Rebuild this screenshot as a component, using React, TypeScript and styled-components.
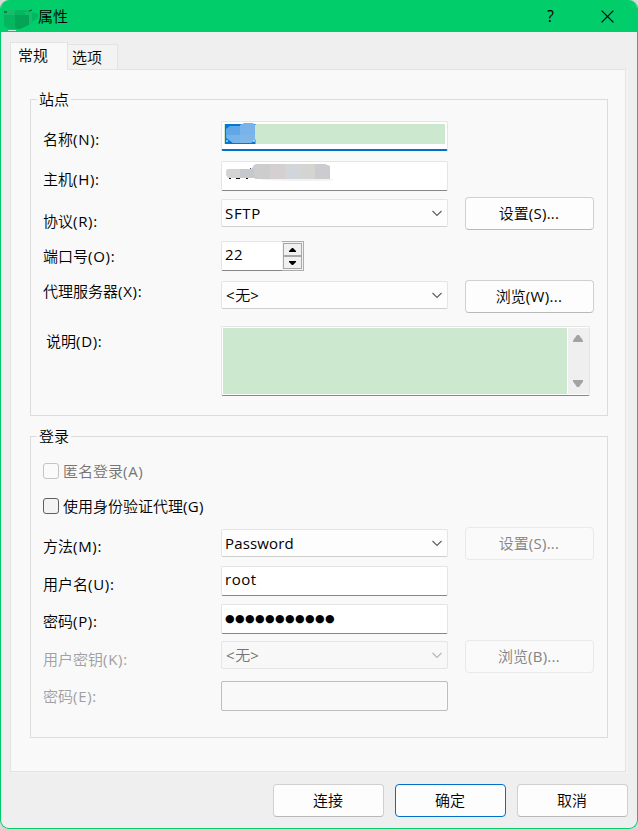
import React from "react";
import styled, { createGlobalStyle, css } from "styled-components";

const GlobalStyle = createGlobalStyle`
  * { box-sizing: border-box; }
  body { margin: 0; background: #d9d9d9; }
  body, button, input, textarea {
    font: 350 15px/20px "Open Sans", "Noto Sans CJK SC", sans-serif;
    color: #000;
  }
`;

const Window = styled.div`
  width: 638px;
  height: 829px;
  display: flex;
  flex-direction: column;
  border: 1px solid #02cd6b;
  border-top: 0;
  border-radius: 9px;
  overflow: hidden;
  background: #efefef;
`;

const TitleBar = styled.header`
  height: 32px;
  flex: none;
  display: flex;
  align-items: center;
  padding-right: 1px;
  background: #02cd6b;
`;

const TitleMosaic = styled.svg`
  flex: none;
  width: 37px;
  height: 32px;
`;

const Title = styled.h1`
  flex: 1;
  margin: 0;
  font-size: 15px;
  font-weight: 350;
`;

const TitleButton = styled.button`
  width: 57px;
  height: 32px;
  padding: 0;
  border: 0;
  background: none;
  display: flex;
  align-items: center;
  justify-content: center;
  font-size: 16px;
  font-weight: 400;
`;

const TabList = styled.div`
  height: 38px;
  flex: none;
  display: flex;
  align-items: flex-end;
  padding-left: 9px;
  position: relative;
  z-index: 1;
`;

const Tab = styled.button<{ $active?: boolean }>`
  border: 1px solid #e3e3e3;
  ${(p) =>
    p.$active
      ? css`
          width: 58px;
          height: 28px;
          padding: 0 12px 3px 0;
          border-bottom: 0;
          background: #f9f9f9;
        `
      : css`
          width: 50px;
          height: 26px;
          padding: 0 11px 1px 0;
          border-left: 0;
          background: #f3f3f3;
        `}
`;

const Panel = styled.main`
  width: 616px;
  height: 703px;
  flex: none;
  margin: -1px 0 0 9px;
  padding: 29px 18px 0 19px;
  border: 1px solid #e3e3e3;
  background: #f9f9f9;
  box-shadow: 2px 1px 0 #f3f3f3;
`;

const Group = styled.section<{ $height: number }>`
  width: 578px;
  height: ${(p) => p.$height}px;
  border: 1px solid #dcdcdc;
  & + & { margin-top: 20px; }
`;

const Legend = styled.h2<{ $gap?: number }>`
  width: 34px;
  height: 20px;
  margin: -11px 0 ${(p) => p.$gap ?? 12}px 6px;
  padding-left: 2px;
  font-size: 15px;
  font-weight: 350;
  white-space: nowrap;
  background: #f9f9f9;
`;

const Row = styled.div<{ $height: number }>`
  height: ${(p) => p.$height}px;
  display: grid;
  grid-template-columns: 190px 227px 129px;
  align-items: start;
`;

const Label = styled.label<{ $top: number; $indent?: number; $disabled?: boolean }>`
  padding: ${(p) => p.$top}px 0 0 ${(p) => p.$indent ?? 12}px;
  color: ${(p) => (p.$disabled ? "#a0a0a0" : "#000")};
  white-space: nowrap;
`;

const Latin = styled.span<{ $spacing?: number }>`
  font-weight: 400;
  letter-spacing: ${(p) => p.$spacing ?? 0.7}px;
`;

const Field = styled.div<{ $focused?: boolean; $disabled?: boolean }>`
  width: 227px;
  height: 30px;
  padding: 2px 2px 0 3px;
  border: 1px solid #e5e5e5;
  border-bottom-color: #868686;
  border-radius: 2px;
  background: #fff;
  ${(p) =>
    p.$focused &&
    css`
      padding: 2px 2px 0;
      border-bottom: 2px solid #0070cc;
    `}
  ${(p) =>
    p.$disabled &&
    css`
      border-color: #bebebe;
      background: #f9f9f9;
    `}
`;

const HighlightedText = styled.div`
  height: 20px;
  background: #cce8cf;
`;

const Mosaic = styled.svg<{ $drop?: number }>`
  display: block;
  margin-top: ${(p) => p.$drop ?? 0}px;
  overflow: visible;
`;

const Select = styled.div<{ $top?: number; $disabled?: boolean; $inset?: number }>`
  width: 227px;
  height: 28px;
  margin-top: ${(p) => p.$top ?? 0}px;
  padding: 0 4px 0 ${(p) => p.$inset ?? 3}px;
  display: flex;
  align-items: center;
  justify-content: space-between;
  border: 1px solid #e5e5e5;
  border-bottom-color: ${(p) => (p.$disabled ? "#e5e5e5" : "#cfcfcf")};
  border-radius: 2px;
  color: ${(p) => (p.$disabled ? "#757575" : "#000")};
  background: ${(p) => (p.$disabled ? "#f8f8f8" : "#fdfdfd")};
`;

const Button = styled.button<{ $primary?: boolean }>`
  height: 33px;
  padding: 0 1px 2px 0;
  border: 1px solid #d0d0d0;
  border-bottom-color: #b9b9b9;
  border-radius: 4px;
  background: #fdfdfd;
  &:disabled {
    border-color: #e9e9e9;
    color: #838383;
    background: #fafafa;
  }
  ${(p) => p.$primary && css`border-color: #0070cc;`}
`;

const SideButton = styled(Button)`
  width: 129px;
  margin-left: 17px;
`;

const Spinner = styled.div`
  width: 83px;
  height: 30px;
  display: grid;
  grid-template-columns: 61px 22px;
`;

const SpinnerValue = styled.div`
  padding: 2px 3px;
  border: 1px solid #e5e5e5;
  border-right: 0;
  border-bottom-color: #868686;
  border-radius: 2px 0 0 2px;
  background: #fff;
`;

const SpinnerButtons = styled.div`
  display: grid;
  grid-template-rows: 13px 13px;
  padding: 1px 1px 0;
  border: 1px solid #ababb0;
  border-left: 0;
  background: #f3f3f3;
`;

const SpinnerButton = styled.button`
  width: 19px;
  padding: 0;
  border: 1px solid #a7a7a7;
  background: #f0f0f0;
  display: flex;
  align-items: center;
  justify-content: center;
`;

const Memo = styled.div`
  width: 369px;
  height: 70px;
  display: grid;
  grid-template-columns: 1fr 21px;
  column-gap: 1px;
  padding: 1px 0;
  border: 1px solid #e5e5e5;
  border-bottom-color: #868686;
  border-radius: 2px;
  background: #fff;
`;

const MemoText = styled.div`
  margin-left: 1px;
  background: #cce8cf;
`;

const ScrollBar = styled.div`
  display: flex;
  flex-direction: column;
  align-items: center;
  justify-content: space-between;
  padding: 6px 2px 6px 0;
  background: #efefef;
`;

const CheckRow = styled.label<{ $disabled?: boolean; $gap: number }>`
  height: 20px;
  margin: 0 0 ${(p) => p.$gap}px 12px;
  display: flex;
  align-items: center;
  gap: 4px;
  color: ${(p) => (p.$disabled ? "#757575" : "#000")};
`;

const CheckBox = styled.span<{ $disabled?: boolean }>`
  width: 16px;
  height: 16px;
  border: 1px solid ${(p) => (p.$disabled ? "#c4c4c4" : "#5f5f5f")};
  border-radius: 3px;
  background: ${(p) => (p.$disabled ? "#fafafa" : "#f3f3f3")};
`;

const PasswordDots = styled.div`
  padding-top: 2px;
  font: 400 11px/20px "DejaVu Sans", sans-serif;
  letter-spacing: 0.4px;
`;

const Footer = styled.footer`
  display: flex;
  justify-content: flex-end;
  gap: 11px;
  padding: 12px 9px 0 0;
`;

const FooterButton = styled(Button)`
  width: 111px;
`;

const Chevron = ({ faded = false }: { faded?: boolean }) => (
  <svg width="12" height="8" viewBox="0 0 12 8" fill="none">
    <path d="M1.500 2 6 6.400 10.500 2" stroke={faded ? "#b5b5b5" : "#5c5c5c"} strokeWidth="1.1" />
  </svg>
);

const SpinArrow = ({ down = false }: { down?: boolean }) => (
  <svg width="7" height="4" viewBox="0 0 7 4">
    <path d={down ? "M0 0h7v1L4 4H3L0 1Z" : "M0 4h7V3L4 0H3L0 3Z"} />
  </svg>
);

const ScrollArrow = ({ down = false }: { down?: boolean }) => (
  <svg width="10" height="8" viewBox="0 0 10 8" fill="#a3a3a3">
    <path d={down ? "M0 0h10v1.500L6 7H4L0 1.500Z" : "M0 8h10V6.500L6 1H4L0 6.500Z"} />
  </svg>
);

export default function App() {
  return (
    <>
      <GlobalStyle />
      <Window>
        <TitleBar>
          <TitleMosaic viewBox="1 0 37 32">
            <path d="M5 10h21l12 4v4l-9 6-9 5H8l-4-3V12Z" fill="#04b660" />
            <path d="M5 10h10v5H4ZM25 12h7v11h-7Z" fill="#14bd6b" />
            <path d="M15 15h14v10l-9 4h-5Z" fill="#04a457" />
            <path d="M4 12h3M29 11l3-1" stroke="#064d29" />
            <path d="M8 30.500h8" stroke="#b9efd4" />
          </TitleMosaic>
          <Title>属性</Title>
          <TitleButton aria-label="帮助">?</TitleButton>
          <TitleButton aria-label="关闭">
            <svg width="13" height="13" viewBox="0 0 13 13" fill="none" stroke="#000" strokeWidth="1.2">
              <path d="m.6.6 11.800 11.800M12.400.6.6 12.400" />
            </svg>
          </TitleButton>
        </TitleBar>

        <TabList>
          <Tab $active>常规</Tab>
          <Tab>选项</Tab>
        </TabList>

        <Panel>
          <Group $height={317}>
            <Legend>站点</Legend>
            <Row $height={40}>
              <Label $top={8}>名称<Latin>(N):</Latin></Label>
              <Field $focused>
                <HighlightedText>
                  <Mosaic width="34" height="20" viewBox="0 0 34 20">
                    <path d="M1 0h30v20H1Z" fill="#0078d7" />
                    <path d="M2 5 6 2h11v17H9l-7-5Z" fill="#60a8e5" />
                    <path d="M16 1l4-2h9l2 2v15l-4 3H16Z" fill="#78b3e9" />
                    <path d="M3 11h28v5l-4 3H9l-6-5Z" fill="#81b9eb" opacity=".65" />
                    <path d="M31.500 0v1M31.500 15.500V20" stroke="#ff8728" />
                    <path d="M2 17h2M29 17h2" stroke="#fff" />
                  </Mosaic>
                </HighlightedText>
              </Field>
            </Row>
            <Row $height={36}>
              <Label $top={8}>主机<Latin>(H):</Latin></Label>
              <Field>
                <Mosaic $drop={1} width="112" height="20" viewBox="0 0 112 20">
                  <path d="M4 13.500h2M11 13.500h4M21 13.500h2" stroke="#111" />
                  <path d="M2 4h13v9H3l-2-3V6Z" fill="#d4d5d2" />
                  <path d="M15 4h11l4-4v13H15Z" fill="#c7c8cc" />
                  <path d="M28 1l3-2h14v15H30Z" fill="#cecdce" />
                  <path d="M45-1h15v15H45Z" fill="#d4d0d1" />
                  <path d="M60-1h15v15H60Z" fill="#d2d5da" />
                  <path d="M75-1h15v15H75Z" fill="#d4d4d0" />
                  <path d="M90-1h10l5 2v13H90Z" fill="#ccccd0" />
                  <path d="M35 14h75l-6 2H66l-28-1Z" fill="#f2f2f3" />
                  <path d="M25 3.500h1" stroke="#285d9b" />
                </Mosaic>
              </Field>
            </Row>
            <Row $height={44}>
              <Label $top={14}>协议<Latin>(R):</Latin></Label>
              <Select $top={2}><Latin>SFTP</Latin><Chevron /></Select>
              <SideButton>设置<Latin $spacing={0.3}>(S)...</Latin></SideButton>
            </Row>
            <Row $height={39}>
              <Label $top={5}>端口号<Latin>(O):</Latin></Label>
              <Spinner>
                <SpinnerValue><Latin $spacing={0.5}>22</Latin></SpinnerValue>
                <SpinnerButtons>
                  <SpinnerButton aria-label="增加"><SpinArrow /></SpinnerButton>
                  <SpinnerButton aria-label="减少"><SpinArrow down /></SpinnerButton>
                </SpinnerButtons>
              </Spinner>
            </Row>
            <Row $height={46}>
              <Label $top={1}>代理服务器<Latin>(X):</Latin></Label>
              <Select $top={1} $inset={4}>
                <span><Latin>&lt;</Latin>无<Latin>&gt;</Latin></span>
                <Chevron />
              </Select>
              <SideButton>浏览<Latin $spacing={0.3}>(W)...</Latin></SideButton>
            </Row>
            <Row $height={70}>
              <Label $top={5} $indent={15}>说明<Latin>(D):</Latin></Label>
              <Memo>
                <MemoText />
                <ScrollBar><ScrollArrow /><ScrollArrow down /></ScrollBar>
              </Memo>
            </Row>
          </Group>

          <Group $height={302}>
            <Legend $gap={15}>登录</Legend>
            <CheckRow $disabled $gap={15}>
              <CheckBox $disabled />
              <span>匿名登录<Latin>(A)</Latin></span>
            </CheckRow>
            <CheckRow $gap={11}>
              <CheckBox />
              <span>使用身份验证代理<Latin $spacing={0.3}>(G)</Latin></span>
            </CheckRow>
            <Row $height={39}>
              <Label $top={9}>方法<Latin>(M):</Latin></Label>
              <Select $top={2}><Latin $spacing={0.15}>Password</Latin><Chevron /></Select>
              <SideButton disabled>设置<Latin $spacing={0.3}>(S)...</Latin></SideButton>
            </Row>
            <Row $height={38}>
              <Label $top={8}>用户名<Latin>(U):</Latin></Label>
              <Field><Latin $spacing={0.5}>root</Latin></Field>
            </Row>
            <Row $height={36}>
              <Label $top={7}>密码<Latin>(P):</Latin></Label>
              <Field><PasswordDots>●●●●●●●●●●●</PasswordDots></Field>
            </Row>
            <Row $height={41}>
              <Label $top={9} $disabled>用户密钥<Latin>(K):</Latin></Label>
              <Select $top={1} $inset={4} $disabled>
                <span><Latin>&lt;</Latin>无<Latin>&gt;</Latin></span>
                <Chevron faded />
              </Select>
              <SideButton disabled>浏览<Latin $spacing={0.3}>(B)...</Latin></SideButton>
            </Row>
            <Row $height={30}>
              <Label $top={5} $disabled>密码<Latin>(E):</Latin></Label>
              <Field $disabled />
            </Row>
          </Group>
        </Panel>

        <Footer>
          <FooterButton>连接</FooterButton>
          <FooterButton $primary>确定</FooterButton>
          <FooterButton>取消</FooterButton>
        </Footer>
      </Window>
    </>
  );
}
